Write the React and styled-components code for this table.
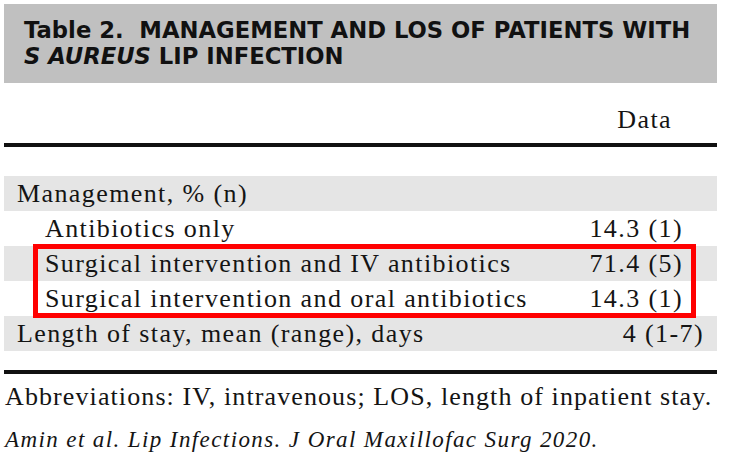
import React from 'react'
import styled, { createGlobalStyle } from 'styled-components'

const Global = createGlobalStyle`
  html, body { margin: 0; padding: 0; background: #fff; }
  body { width: 750px; height: 463px; overflow: hidden; }
`

const rows = [
  { label: 'Management, % (n)', value: '', shade: true },
  { label: 'Antibiotics only', value: '14.3 (1)', indent: true },
  { label: 'Surgical intervention and IV antibiotics', value: '71.4 (5)', indent: true, shade: true, marked: true },
  { label: 'Surgical intervention and oral antibiotics', value: '14.3 (1)', indent: true, marked: true },
  { label: 'Length of stay, mean (range), days', value: '4 (1-7)', shade: true, wide: true },
]

export default function App() {
  const before = rows.filter((r, i) => !r.marked && i < 2)
  const marked = rows.filter(r => r.marked)
  const after = rows.filter((r, i) => !r.marked && i >= 2)

  const renderRow = r => (
    <Row key={r.label} $shade={r.shade}>
      <Label $indent={r.indent}>{r.label}</Label>
      <Value $wide={r.wide}>{r.value}</Value>
    </Row>
  )

  return (
    <Page>
      <Global />
      <Table>
        <TitleBar>
          <Title>
            Table 2.&nbsp; MANAGEMENT AND LOS OF PATIENTS WITH
            <br />
            <em>S AUREUS</em> LIP INFECTION
          </Title>
        </TitleBar>
        <ColumnHead>Data</ColumnHead>
        <Rule />
        <Body>
          {before.map(renderRow)}
          <Highlight>{marked.map(renderRow)}</Highlight>
          {after.map(renderRow)}
        </Body>
        <Rule $gap />
      </Table>
      <Footnote>Abbreviations: IV, intravenous; LOS, length of inpatient stay.</Footnote>
      <Citation>Amin et al. Lip Infections. J Oral Maxillofac Surg 2020.</Citation>
    </Page>
  )
}

const Page = styled.div`
  width: 750px;
  height: 463px;
  padding: 4px 0 0 4px;
  box-sizing: border-box;
  color: #141414;
  font-family: "Liberation Serif", "Times New Roman", serif;
`

const Table = styled.div`
  width: 713px;
  display: flex;
  flex-direction: column;
`

const TitleBar = styled.div`
  height: 79px;
  background: #c0c0c0;
  padding: 13px 0 0 20px;
  box-sizing: border-box;
`

const Title = styled.div`
  font-family: "DejaVu Sans", Verdana, sans-serif;
  font-weight: bold;
  font-size: 22.7px;
  line-height: 26px;
  color: #111;
  white-space: nowrap;

  em {
    font-style: italic;
  }
`

const ColumnHead = styled.div`
  height: 60px;
  display: flex;
  align-items: flex-end;
  justify-content: flex-end;
  padding: 0 45px 8px 0;
  box-sizing: border-box;
  font-size: 26px;
  letter-spacing: 1.4px;
`

const Rule = styled.div`
  height: 4px;
  background: #111;
  margin-top: ${p => (p.$gap ? '19px' : '0')};
`

const Body = styled.div`
  margin-top: 29px;
  display: flex;
  flex-direction: column;
`

const Highlight = styled.div`
  position: relative;

  &::after {
    content: '';
    position: absolute;
    left: 29px;
    right: 21px;
    top: -2px;
    bottom: -2px;
    border: 5px solid #ff0000;
    pointer-events: none;
  }
`

const Row = styled.div`
  height: 35px;
  display: flex;
  align-items: center;
  justify-content: space-between;
  background: ${p => (p.$shade ? '#e5e5e5' : 'transparent')};
  font-size: 26px;
  letter-spacing: 1.4px;
  white-space: nowrap;
`

const Label = styled.span`
  padding-left: ${p => (p.$indent ? '41px' : '13px')};
`

const Value = styled.span`
  padding-right: ${p => (p.$wide ? '13px' : '34px')};
`

const Footnote = styled.div`
  margin-top: 8px;
  padding-left: 1px;
  font-size: 26px;
  letter-spacing: 1.1px;
  white-space: nowrap;
`

const Citation = styled.div`
  margin-top: 15px;
  padding-left: 1px;
  font-size: 23px;
  letter-spacing: 1.4px;
  font-style: italic;
  white-space: nowrap;
`
